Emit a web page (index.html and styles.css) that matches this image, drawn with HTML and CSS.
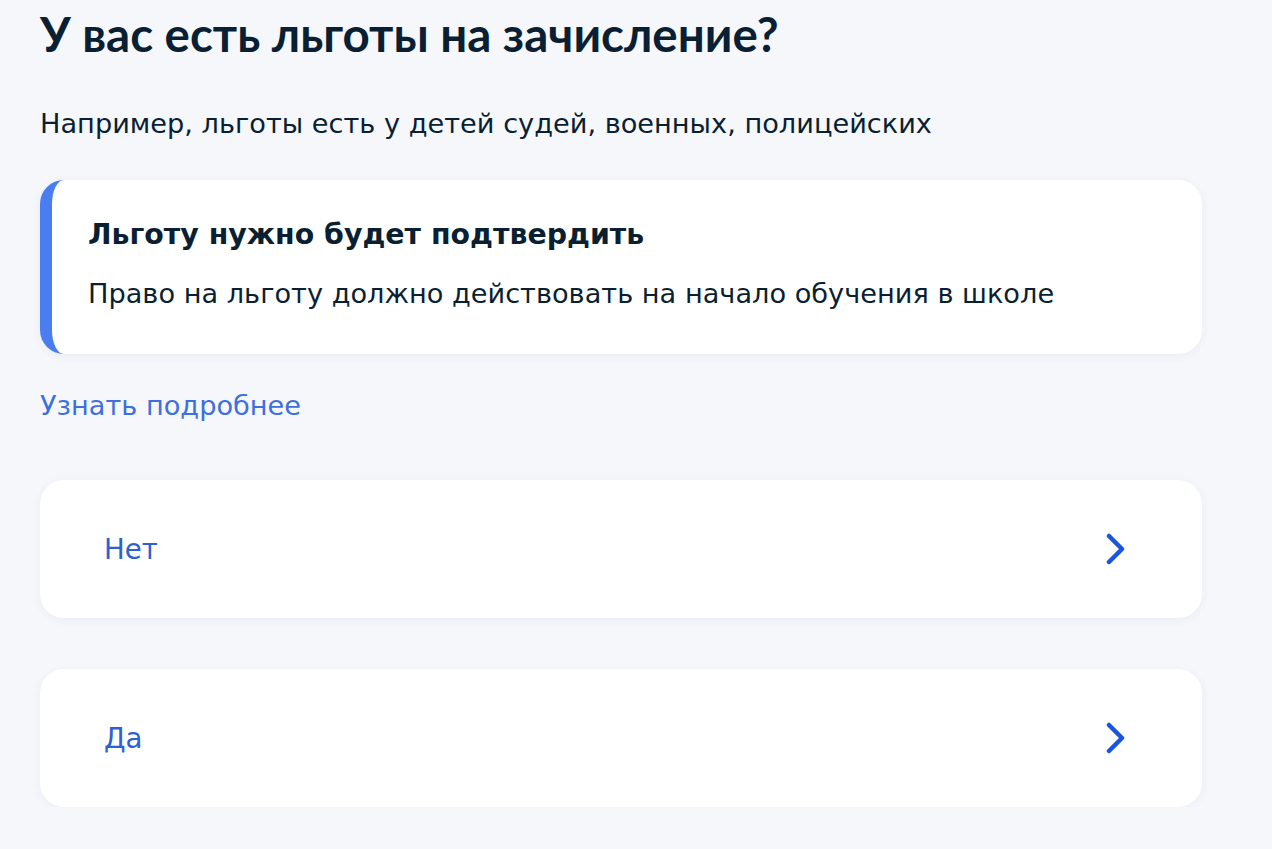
FILE: index.html
```html
<!DOCTYPE html>
<html lang="ru">
<head>
  <meta charset="UTF-8" />
  <meta name="viewport" content="width=device-width, initial-scale=1.0"/>
  <title>Льготы на зачисление</title>
  <link rel="stylesheet" href="styles.css">
</head>
<body>
  <main class="step">
    <h1 class="step-title">У вас есть льготы на зачисление?</h1>
    <p class="step-hint">Например, льготы есть у детей судей, военных, полицейских</p>

    <div class="notice">
      <h3 class="notice-title">Льготу нужно будет подтвердить</h3>
      <p class="notice-text">Право на льготу должно действовать на начало обучения в школе</p>
    </div>

    <a class="more-link" href="#">Узнать подробнее</a>

    <div class="answers">
      <button class="answer" type="button">
        <span>Нет</span>
        <svg class="chevron" width="20" height="32" viewBox="0 0 20 32"><path d="M3 3 L16 16 L3 29" /></svg>
      </button>
      <button class="answer" type="button">
        <span>Да</span>
        <svg class="chevron" width="20" height="32" viewBox="0 0 20 32"><path d="M3 3 L16 16 L3 29" /></svg>
      </button>
    </div>
  </main>
</body>
</html>
```

FILE: styles.css
```css
body {
  margin: 0;
  background: #f5f7fb;
  font-family: "DejaVu Sans", "Noto Sans", sans-serif;
  color: #0b1f33;
}
.step {
  width: 1162px;
  padding: 0 0 0 40px;
}
.step-title {
  margin: 0;
  padding-top: 6px;
  font-family: Lato, "Noto Sans", sans-serif;
  font-size: 47.5px;
  line-height: 56px;
  font-weight: 700;
}
.step-hint {
  margin: 44px 0 0;
  font-size: 27.2px;
  line-height: 36px;
}
.notice {
  margin-top: 38px;
  background: #fff;
  border-left: 12px solid #4a7ef0;
  border-radius: 24px;
  padding: 37px 36px 42px;
  box-shadow: 0 2px 10px rgba(40, 60, 110, 0.06);
}
.notice-title {
  margin: 0;
  font-size: 28.4px;
  line-height: 36px;
  font-weight: 700;
}
.notice-text {
  margin: 23px 0 0;
  font-size: 27.2px;
  line-height: 36px;
}
.more-link {
  display: inline-block;
  margin-top: 34px;
  font-size: 27.2px;
  line-height: 36px;
  color: #3e6fdc;
  text-decoration: none;
}
.answers {
  margin-top: 56px;
  display: flex;
  flex-direction: column;
  gap: 51px;
}
.answer {
  display: flex;
  align-items: center;
  justify-content: space-between;
  height: 138px;
  padding: 0 76px 0 64px;
  border: none;
  border-radius: 24px;
  background: #fff;
  box-shadow: 0 2px 10px rgba(40, 60, 110, 0.06);
  font-family: inherit;
  font-size: 27.6px;
  color: #2d5fd6;
  cursor: pointer;
}
.chevron path {
  fill: none;
  stroke: #1a55e0;
  stroke-width: 4.5;
  stroke-linecap: round;
  stroke-linejoin: round;
}
```
